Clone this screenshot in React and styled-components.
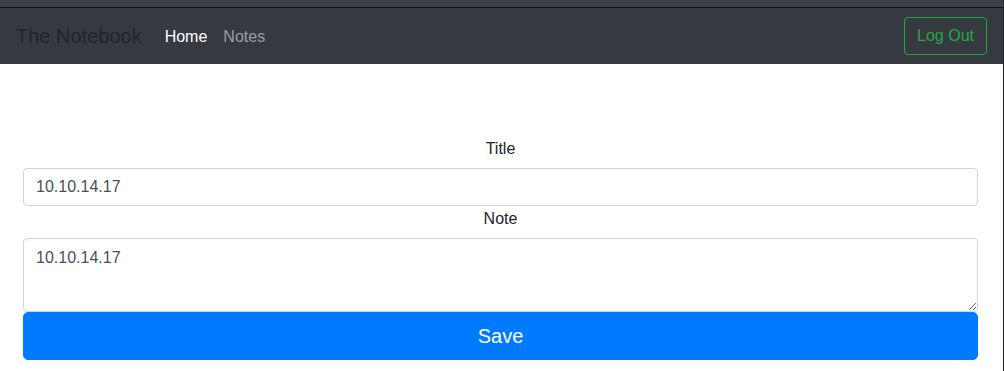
import React from 'react';
import styled, { createGlobalStyle } from 'styled-components';

const GlobalStyle = createGlobalStyle`
  html, body {
    margin: 0;
    padding: 0;
    background: #fff;
  }
  body {
    font-family: "Liberation Sans", Arial, sans-serif;
    font-size: 16px;
    line-height: 1.5;
    color: #212529;
  }
  * {
    box-sizing: border-box;
  }
`;

const Page = styled.div`
  width: 1004px;
  height: 371px;
  border-right: 1px solid #222427;
  overflow: hidden;
`;

const TopStrip = styled.div`
  height: 8px;
  background: #3c3f46;
  border-bottom: 1px solid #121314;
`;

const Navbar = styled.nav`
  height: 56px;
  background: #343a40;
  display: flex;
  align-items: center;
  padding: 8px 16px;
`;

const Brand = styled.span`
  font-size: 20px;
  line-height: 30px;
  color: #212529;
  margin-right: 15px;
  padding: 5px 0;
`;

const NavLinks = styled.div`
  display: flex;
  flex: 1;
`;

const NavLink = styled.a`
  padding: 9px 8px 7px;
  font-size: 16px;
  color: ${props => (props.active ? '#fff' : 'rgba(255, 255, 255, 0.5)')};
  text-decoration: none;
`;

const OutlineButton = styled.button`
  font-family: inherit;
  font-size: 16px;
  line-height: 24px;
  padding: 6px 12px;
  color: #28a745;
  background: transparent;
  border: 1px solid #28a745;
  border-radius: 4px;
`;

const Container = styled.main`
  padding: 73px 25px 0 23px;
`;

const Form = styled.form`
  display: flex;
  flex-direction: column;
`;

const Label = styled.label`
  display: block;
  text-align: center;
  margin-bottom: 7px;
  line-height: 24px;
  padding-top: ${props => (props.gap ? '1px' : '0')};
`;

const Input = styled.input`
  display: block;
  width: 100%;
  height: 38px;
  padding: 6px 12px;
  font-family: inherit;
  font-size: 16px;
  line-height: 24px;
  color: #495057;
  background: #fff;
  border: 1px solid #ced4da;
  border-radius: 4px;
  outline: none;
`;

const TextArea = styled.textarea`
  display: block;
  width: 100%;
  height: 74px;
  padding: 7px 12px 6px;
  font-family: inherit;
  font-size: 16px;
  line-height: 24px;
  color: #495057;
  background: #fff;
  border: 1px solid #ced4da;
  border-radius: 4px;
  resize: vertical;
  outline: none;
`;

const SaveButton = styled.button`
  display: block;
  width: 100%;
  height: 48px;
  font-family: inherit;
  font-size: 20px;
  line-height: 30px;
  color: #fff;
  background: #007bff;
  border: 1px solid #007bff;
  border-radius: 5px;
`;

export default function App() {
  return (
    <>
      <GlobalStyle />
      <Page>
        <TopStrip />
        <Navbar>
          <Brand>The Notebook</Brand>
          <NavLinks>
            <NavLink active href="#">Home</NavLink>
            <NavLink href="#">Notes</NavLink>
          </NavLinks>
          <OutlineButton>Log Out</OutlineButton>
        </Navbar>
        <Container>
          <Form onSubmit={e => e.preventDefault()}>
            <Label htmlFor="title">Title</Label>
            <Input id="title" defaultValue="10.10.14.17" />
            <Label gap htmlFor="note">Note</Label>
            <TextArea id="note" defaultValue="10.10.14.17" />
            <SaveButton type="submit">Save</SaveButton>
          </Form>
        </Container>
      </Page>
    </>
  );
}
